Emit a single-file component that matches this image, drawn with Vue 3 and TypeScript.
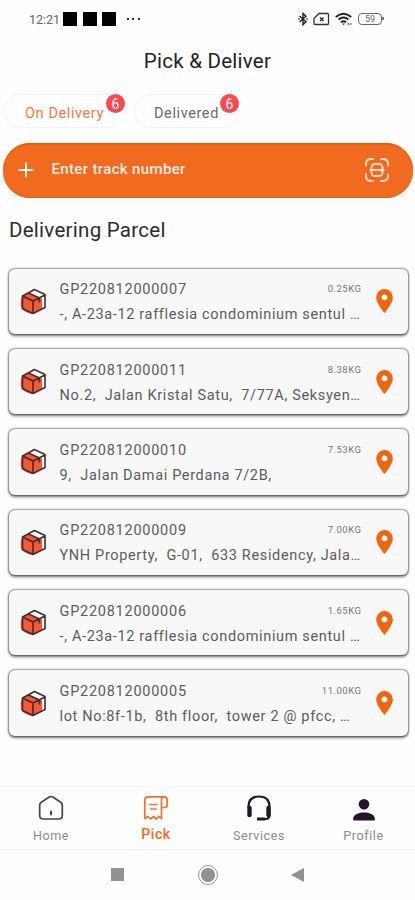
<script setup lang="ts">
interface Parcel {
  code: string
  address: string
  weight: string
}

const parcels: Parcel[] = [
  { code: 'GP220812000007', address: '-, A-23a-12 rafflesia condominium sentul …', weight: '0.25KG' },
  { code: 'GP220812000011', address: 'No.2,  Jalan Kristal Satu,  7/77A, Seksyen…', weight: '8.38KG' },
  { code: 'GP220812000010', address: '9,  Jalan Damai Perdana 7/2B,', weight: '7.53KG' },
  { code: 'GP220812000009', address: 'YNH Property,  G-01,  633 Residency, Jala…', weight: '7.00KG' },
  { code: 'GP220812000006', address: '-, A-23a-12 rafflesia condominium sentul …', weight: '1.65KG' },
  { code: 'GP220812000005', address: 'lot No:8f-1b,  8th floor,  tower 2 @ pfcc, …', weight: '11.00KG' },
]
</script>

<template>
  <div class="screen">
    <header class="status">
      <span class="time">12:21</span>
      <span class="blocks"><i></i><i></i><i></i></span>
      <span class="dots"><i></i><i></i><i></i></span>
      <span class="spacer"></span>
      <svg class="bt" width="10" height="14" viewBox="0 0 10 14" fill="none" stroke="#222" stroke-width="1.4">
        <path d="M1.5 4 8 9.7 5 12.6V1.4L8 4.3 1.5 10" />
        <path d="M.3 7h1.4M8.3 7h1.4" />
      </svg>
      <svg class="sim" width="17" height="14" viewBox="0 0 17 14" fill="none" stroke="#333" stroke-width="1.3">
        <path d="M6 1.5h8.5q1 0 1 1v9q0 1-1 1H2q-1 0-1-1V6.5z" />
        <path d="m7 5.500 3.500 3.500M10.500 5.500 7 9" stroke-width="1.500" />
      </svg>
      <svg class="wifi" width="18" height="14" viewBox="0 0 18 14" fill="none" stroke="#222" stroke-width="1.9">
        <path d="M.8 5q7.700-6.500 15.400 0M3.500 7.600q5-4 10 0M5.800 10.200q2.700-2 5.400 0" />
        <path d="M7 11.500h3l-1.500 1.500z" fill="#222" stroke="none" />
        <path d="M12.500 12h4" stroke="#777" stroke-width="2" stroke-dasharray="1.500 .8" />
      </svg>
      <span class="battery">59</span>
    </header>

    <h1>Pick &amp; Deliver</h1>

    <div class="tabs">
      <button class="tab active">On Delivery<span class="badge">6</span></button>
      <button class="tab second">Delivered<span class="badge">6</span></button>
    </div>

    <div class="track">
      <svg width="16" height="16" viewBox="0 0 16 16" stroke="#fff3ea" stroke-width="1.900"><path d="M8 .5v15M.5 8h15" /></svg>
      <span class="hint">Enter track number</span>
      <svg width="24" height="24" viewBox="0 0 24 24" fill="none" stroke="#ffe0cc" stroke-width="1.900" stroke-linecap="round">
        <path d="M1 7.500V6q0-5 5-5h2M16 1h2q5 0 5 5v1.500M23 16.500V18q0 5-5 5h-2M8 23H6q-5 0-5-5v-1.500M5 12h14" />
        <rect x="6.500" y="6" width="11" height="12" rx="3.500" />
      </svg>
    </div>

    <h2>Delivering Parcel</h2>

    <main class="list">
      <article v-for="p in parcels" :key="p.code" class="card">
        <svg class="box" width="27" height="27" viewBox="0 0 27 27" stroke-linejoin="round">
          <path d="M13.500 1.500 25 7v12.500L13.500 25.500 2.500 20V7z" fill="#fafafa" />
          <path d="M2 8.500 8.500 5 22 10.500V20.500L12 26Q2 24 .8 18.500V12z" fill="#fb5732" />
          <path d="M14.500 1.500 25 6.500v13L13 25.500 2.500 20.500V8zM2.500 8l10.500 5L25 7M13 13v12.500M8.500 5 19.500 10v4.500" fill="none" stroke="#3a2f33" stroke-width="1.600" />
        </svg>
        <div class="info">
          <div class="line">
            <span class="code">{{ p.code }}</span>
            <span class="weight">{{ p.weight }}</span>
          </div>
          <div class="address">{{ p.address }}</div>
        </div>
        <svg class="pin" width="17" height="24" viewBox="0 0 17 24">
          <path d="M8.500 0A8.300 8.300 0 0 0 .2 8.400C.2 14.500 8.500 24 8.500 24s8.300-9.500 8.300-15.600A8.300 8.300 0 0 0 8.500 0z" fill="#f2640f" />
          <circle cx="8.500" cy="8.300" r="2.900" fill="#fff" />
        </svg>
      </article>
    </main>

    <nav class="nav">
      <div class="item home">
        <svg width="26" height="26" viewBox="0 0 26 26" fill="none" stroke="#48434a" stroke-width="1.700" stroke-linejoin="round" stroke-linecap="round">
          <path d="M11.300 2q1.700-1 3.400 0l8 5.200q1.600 1.100 1.600 3v10.300q0 3.500-3.500 3.500H5.200q-3.500 0-3.500-3.500V10.200q0-1.900 1.600-3z" />
          <path d="M13 16.500v3" stroke-width="2" />
        </svg>
        <span>Home</span>
      </div>
      <div class="item pick">
        <svg width="26" height="26" viewBox="0 0 26 26" fill="none" stroke="#f27232" stroke-width="1.700" stroke-linejoin="round" stroke-linecap="round">
          <path d="M20.500 1.800H5.500Q1.800 1.800 1.800 5.500v18l3-2 2.700 2.500 3-2.500 2.800 2.500 2.500-2.500 2.700 2V4.500q0-2.700 2.500-2.700 3.200 0 3.200 3.200v5q0 2.500-2.500 2.500h-3.200M7 9.500h7M8 14h5" />
        </svg>
        <span>Pick</span>
      </div>
      <div class="item services">
        <svg width="26" height="26" viewBox="0 0 26 26" fill="none" stroke="#20152b">
          <path d="M2.500 13v-2Q3 1.500 13 1.500T23.500 11v9q0 4-4 4h-4" stroke-width="2.200" />
          <path d="M3.500 13v7M22.500 13v7" stroke-width="4.400" stroke-linecap="round" />
          <path d="M11 24h8" stroke-width="3" />
        </svg>
        <span>Services</span>
      </div>
      <div class="item profile">
        <svg width="26" height="26" viewBox="0 0 26 26" fill="#24142e">
          <circle cx="13" cy="9.200" r="5.300" />
          <path d="M2.300 25.500v-2.300c0-4 6-5.800 10.700-5.800s10.700 1.800 10.700 5.800v2.300z" />
        </svg>
        <span>Profile</span>
      </div>
    </nav>

    <footer class="system">
      <i class="recent"></i>
      <i class="circle"></i>
      <svg width="13" height="14" viewBox="0 0 13 14"><path d="M13 0v14L0 7z" fill="#929292" /></svg>
    </footer>
  </div>
</template>

<style>
body {
  background: #fefefe;
}
</style>

<style scoped>
.screen {
  box-sizing: border-box;
  width: 415px;
  height: 900px;
  overflow: hidden;
  display: flex;
  flex-direction: column;
  background: #fefefe;
  font-family: Roboto, "Liberation Sans", sans-serif;
  color: #222;
}
.screen > * {
  flex: none;
}
.status {
  height: 38px;
  display: flex;
  align-items: center;
  padding: 0 30px 0 29px;
}
.time {
  font-size: 12.5px;
  color: #666;
  width: 34px;
  white-space: nowrap;
  padding-top: 1px;
}
.blocks {
  display: flex;
  gap: 5.5px;
}
.blocks i {
  width: 14px;
  height: 14px;
  background: #000;
}
.dots {
  display: flex;
  gap: 3.5px;
  margin-left: 10.5px;
}
.dots i {
  width: 2.2px;
  height: 2.2px;
  background: #333;
}
.spacer {
  flex: 1;
}
.bt {
  margin-right: 5px;
}
.sim {
  margin-right: 5px;
}
.wifi {
  margin-right: 5px;
}
.battery {
  box-sizing: border-box;
  position: relative;
  width: 24px;
  height: 12px;
  border: 1.5px solid #666;
  border-radius: 4px;
  font-size: 9px;
  line-height: 10px;
  text-align: center;
  color: #666;
  margin-right: 3px;
}
.battery::after {
  content: "";
  position: absolute;
  right: -3px;
  top: 3px;
  width: 2px;
  height: 3px;
  background: #777;
}
h1 {
  margin: 10px 0 0;
  height: 26px;
  line-height: 26px;
  font-size: 20.500px;
  font-weight: 400;
  text-align: center;
  letter-spacing: 0.250px;
}
.tabs {
  display: flex;
  gap: 8px;
  margin: 20px 0 0 4px;
}
.tab {
  position: relative;
  box-sizing: border-box;
  height: 34px;
  width: 122px;
  padding: 3px 0 0 20px;
  border: 1px solid #f3f3f3;
  border-radius: 17px;
  background: #fefefe;
  font: 400 14.500px/31px Roboto, "Liberation Sans", sans-serif;
  letter-spacing: 0.6px;
  text-align: left;
  color: #6a6a6a;
}
.tab.second {
  width: 105px;
  padding-left: 19px;
}
.tab.active {
  color: #ee7b46;
}
.badge {
  position: absolute;
  right: 0;
  top: -1px;
  width: 19px;
  height: 19px;
  border-radius: 50%;
  background: #fb4a4d;
  color: #fff;
  font-size: 14px;
  line-height: 20px;
  letter-spacing: 0;
  text-align: center;
}
.second .badge {
  right: -1px;
}
.track {
  box-sizing: border-box;
  height: 55px;
  margin: 14.500px 2px 0 2.500px;
  padding: 0 24px 0 15.500px;
  border-radius: 27px;
  background: #f26a20;
  box-shadow: inset 0 1.500px 0 #e25c0c, inset 0 -1px 0 #e86012;
  display: flex;
  align-items: center;
}
.hint {
  flex: 1;
  margin-left: 17.500px;
  color: #ffede2;
  font-size: 15px;
  font-weight: 500;
  letter-spacing: 0.350px;
  padding-bottom: 2px;
}
h2 {
  margin: 18px 0 0 9px;
  height: 28px;
  line-height: 28px;
  font-size: 20.500px;
  font-weight: 400;
  letter-spacing: 0.270px;
  color: #2c2a30;
}
.list {
  display: flex;
  flex-direction: column;
  gap: 15px;
  margin: 25px 7px 0 8.500px;
}
.card {
  box-sizing: border-box;
  height: 65.400px;
  display: flex;
  align-items: center;
  padding: 0 15px 0 11px;
  border-radius: 6px;
  background: #f8f8f8;
  box-shadow: 0 0 1.500px 0.500px rgba(0, 0, 0, 0.35), 0 1.500px 3px rgba(0, 0, 0, 0.5);
}
.box {
  flex: none;
}
.info {
  flex: 1;
  min-width: 0;
  margin-left: 13px;
  padding-top: 3px;
}
.line {
  display: flex;
  justify-content: space-between;
  height: 25px;
  line-height: 25px;
  width: 302px;
}
.code {
  font-size: 14.500px;
  letter-spacing: 0.75px;
  color: #5c5c5c;
}
.weight {
  font-size: 9.500px;
  letter-spacing: 0.5px;
  line-height: 23px;
  color: #777;
}
.address {
  white-space: pre;
  font-size: 14.500px;
  line-height: 26px;
  letter-spacing: 0.650px;
  color: #5c5c5c;
}
.pin {
  flex: none;
}
.nav {
  box-sizing: border-box;
  height: 64px;
  margin-top: 50px;
  border-top: 1px solid #f4f4f4;
  border-bottom: 1px solid #f2f2f2;
  display: grid;
  grid-template-columns: repeat(4, 104px);
}
.item {
  display: flex;
  flex-direction: column;
  align-items: center;
  padding-top: 8px;
  font-size: 12.500px;
  line-height: 18px;
  letter-spacing: 0.6px;
  color: #8a8a8a;
}
.item.home {
  padding-right: 2px;
}
.item.services {
  padding-right: 2px;
}
.item.profile {
  padding-right: 1px;
}
.item span {
  margin-top: 6px;
}
.item.pick {
  color: #f26a26;
  font-size: 14px;
  font-weight: 500;
}
.item.pick span {
  margin-top: 4px;
}
.system {
  display: flex;
  align-items: center;
  height: 50px;
  padding-left: 111px;
}
.recent {
  width: 12.500px;
  height: 13px;
  background: #929292;
}
.circle {
  box-sizing: border-box;
  width: 20px;
  height: 20px;
  margin: 0 73px 0 74px;
  border: 1.500px solid #929292;
  border-radius: 50%;
  background: radial-gradient(circle, #929292 0 6.500px, #fefefe 7.500px);
}
</style>
